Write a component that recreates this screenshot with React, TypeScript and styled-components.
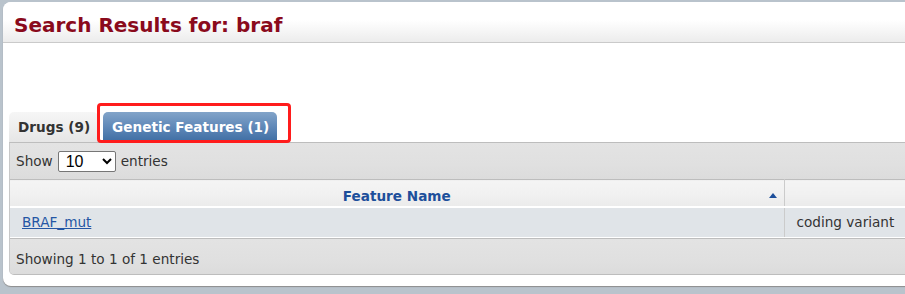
import React from 'react';
import styled, { createGlobalStyle } from 'styled-components';

const GlobalStyle = createGlobalStyle`
    html, body {
        margin: 0;
        padding: 0;
        background: #b9c3cc;
        overflow: hidden;
    }
    body {
        font-family: "DejaVu Sans", Verdana, sans-serif;
        font-size: 13.6px;
        color: #333;
    }
`

const Page = styled.div`
    padding: 2px 0 0 3px;
    width: 960px;
    height: 294px;
    box-sizing: border-box;
`

const Panel = styled.div`
    background: #fff;
    border-radius: 8px;
    height: 284px;
    box-shadow: 0 1px 1px #8d8d8d;
    overflow: hidden;
`

const Header = styled.div`
    height: 41px;
    box-sizing: border-box;
    padding: 10px 0 0 11px;
    border-bottom: 1px solid #cacaca;
    background: linear-gradient(to bottom, #fff 0%, #fff 45%, #ececec 100%);
`

const Title = styled.h1`
    margin: 0;
    font-size: 20px;
    font-weight: bold;
    color: #8a0a1c;
    line-height: 26px;
`

const Body = styled.div`
    padding: 68px 0 0 6px;
`

const TabList = styled.div`
    position: relative;
    display: flex;
    align-items: flex-end;
    gap: 5px;
    height: 31px;
`

const Tab = styled.div<{ $active?: boolean }>`
    height: 30px;
    box-sizing: border-box;
    padding: 0 8px 0 9px;
    display: flex;
    align-items: center;
    font-weight: bold;
    border-radius: 5px 5px 0 0;
    color: ${p => (p.$active ? '#fff' : '#333')};
    background: ${p => (p.$active
        ? 'linear-gradient(to bottom, #82a4c9 0%, #5f88b8 50%, #3e6da3 100%)'
        : 'linear-gradient(to bottom, #f6f6f6 0%, #e6e6e6 100%)')};
`

const Highlight = styled.div`
    position: absolute;
    left: 88px;
    top: -8px;
    width: 194px;
    height: 40px;
    box-sizing: border-box;
    border: 3px solid #ff1c1c;
    border-radius: 4px;
    pointer-events: none;
`

const Wrapper = styled.div`
    border-top: 1px solid #bdbdbd;
    border-left: 1px solid #c8c8c8;
    border-bottom: 1px solid #bdbdbd;
    border-bottom-left-radius: 5px;
    background: #e2e2e2;
    overflow: hidden;
`

const LengthRow = styled.div`
    height: 36px;
    display: flex;
    align-items: center;
    padding-left: 6px;
    gap: 5px;
    background: linear-gradient(to bottom, #e3e3e3 0%, #e0e0e0 60%, #dcdcdc 100%);
`

const Select = styled.select`
    width: 58px;
    height: 21px;
    font-family: "Liberation Sans", Arial, sans-serif;
    font-size: 16px;
    background: #fff;
    border: 1px solid #767676;
    border-radius: 2px;
    padding: 0 0 0 3px;
    color: #000;
`

const Table = styled.table`
    width: 100%;
    border-collapse: collapse;
    border-top: 1px solid #bdbdbd;
`

const HeadCell = styled.th<{ $width?: string }>`
    position: relative;
    height: 27px;
    box-sizing: border-box;
    padding: 7px 0 0 0;
    width: ${p => p.$width || 'auto'};
    color: #1d4f9b;
    font-weight: bold;
    text-align: center;
    border-bottom: 2px solid #fff;
    border-right: 1px solid #cbcbcb;
    background: linear-gradient(to bottom, #f4f4f4 0%, #f1f1f1 50%, #ebebeb 100%);
`

const SortArrow = styled.span`
    position: absolute;
    right: 7px;
    top: 13px;
    width: 0;
    height: 0;
    border-left: 4px solid transparent;
    border-right: 4px solid transparent;
    border-bottom: 5px solid #1d4f9b;
`

const Cell = styled.td`
    height: 29px;
    padding: 0 0 0 12px;
    background: #e0e4e8;
    border-right: 1px solid #cbcbcb;
    border-bottom: 1px solid #fff;
    white-space: nowrap;
`

const FeatureLink = styled.a`
    color: #2456a4;
    text-decoration: underline;
`

const Footer = styled.div`
    height: 36px;
    box-sizing: border-box;
    display: flex;
    align-items: center;
    padding: 6px 0 0 6px;
    border-top: 1px solid #bdbdbd;
    background: linear-gradient(to bottom, #e3e3e3 0%, #e0e0e0 60%, #dcdcdc 100%);
`

const App = () => {
    return (
        <>
            <GlobalStyle />
            <Page>
                <Panel>
                    <Header>
                        <Title>Search Results for: braf</Title>
                    </Header>
                    <Body>
                        <TabList>
                            <Tab>Drugs (9)</Tab>
                            <Tab $active>Genetic Features (1)</Tab>
                            <Highlight />
                        </TabList>
                        <Wrapper>
                            <LengthRow>
                                <span>Show</span>
                                <Select defaultValue="10">
                                    <option value="10">10</option>
                                    <option value="25">25</option>
                                    <option value="50">50</option>
                                    <option value="100">100</option>
                                </Select>
                                <span>entries</span>
                            </LengthRow>
                            <Table>
                                <thead>
                                    <tr>
                                        <HeadCell $width="774px">
                                            Feature Name
                                            <SortArrow />
                                        </HeadCell>
                                        <HeadCell />
                                    </tr>
                                </thead>
                                <tbody>
                                    <tr>
                                        <Cell>
                                            <FeatureLink href="#">BRAF_mut</FeatureLink>
                                        </Cell>
                                        <Cell>coding variant</Cell>
                                    </tr>
                                </tbody>
                            </Table>
                            <Footer>Showing 1 to 1 of 1 entries</Footer>
                        </Wrapper>
                    </Body>
                </Panel>
            </Page>
        </>
    )
}

export default App;
